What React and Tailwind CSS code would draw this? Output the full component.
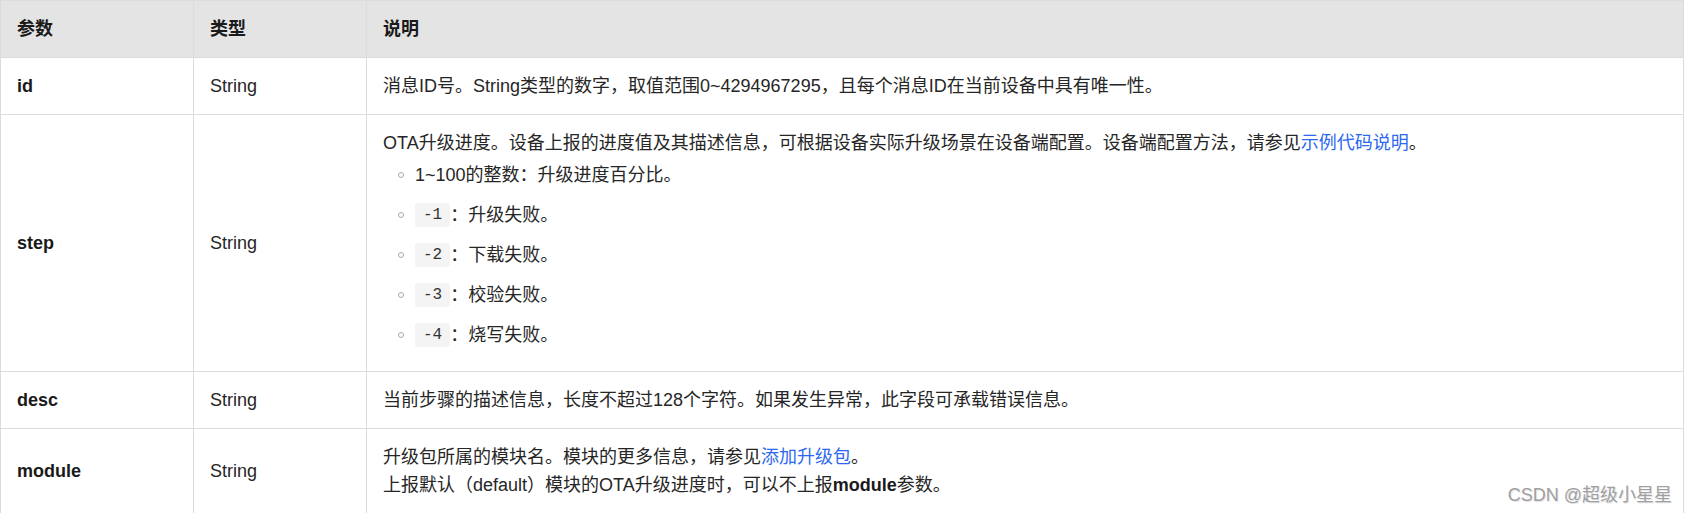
import React from 'react';

const Code = ({ children }) => (
  <code className="flex h-6 items-center rounded-[3px] bg-[#f4f4f4] px-2 font-['Liberation_Mono',monospace] text-[16px] text-[#333]">
    {children}
  </code>
);

const Item = ({ children }) => (
  <li className="flex h-7 items-center">
    <span className="ml-[15px] mr-[11px] h-[6px] w-[6px] shrink-0 rounded-full border border-[#aaa]" />
    <span className="flex h-7 items-center">{children}</span>
  </li>
);

const Link = ({ children }) => <a className="text-[#2c68f0]">{children}</a>;

const rows = [
  {
    name: 'id',
    type: 'String',
    desc: <p>消息ID号。String类型的数字，取值范围0~4294967295，且每个消息ID在当前设备中具有唯一性。</p>,
  },
  {
    name: 'step',
    type: 'String',
    desc: (
      <>
        <p>
          OTA升级进度。设备上报的进度值及其描述信息，可根据设备实际升级场景在设备端配置。设备端配置方法，请参见<Link>示例代码说明</Link>。
        </p>
        <ul className="mt-1 mb-2 flex flex-col gap-3">
          <Item>1~100的整数：升级进度百分比。</Item>
          <Item><Code>-1</Code>：升级失败。</Item>
          <Item><Code>-2</Code>：下载失败。</Item>
          <Item><Code>-3</Code>：校验失败。</Item>
          <Item><Code>-4</Code>：烧写失败。</Item>
        </ul>
      </>
    ),
  },
  {
    name: 'desc',
    type: 'String',
    desc: <p>当前步骤的描述信息，长度不超过128个字符。如果发生异常，此字段可承载错误信息。</p>,
  },
  {
    name: 'module',
    type: 'String',
    desc: (
      <>
        <p>升级包所属的模块名。模块的更多信息，请参见<Link>添加升级包</Link>。</p>
        <p>
          上报默认（default）模块的OTA升级进度时，可以不上报<strong className="font-bold text-[#1a1a1a]">module</strong>参数。
        </p>
      </>
    ),
  },
];

export default function App() {
  return (
    <div className="relative w-[1684px] bg-white font-['Liberation_Sans','Noto_Sans_CJK_SC',sans-serif] text-[18px] leading-7 text-[#262626]">
      <table className="w-full table-fixed border-collapse">
        <colgroup>
          <col className="w-[193px]" />
          <col className="w-[173px]" />
          <col />
        </colgroup>
        <thead>
          <tr className="bg-[#e4e4e4]">
            <th className="border border-[#dcdcdc] px-4 py-[14px] text-left font-bold text-[#1a1a1a]">参数</th>
            <th className="border border-[#dcdcdc] px-4 py-[14px] text-left font-bold text-[#1a1a1a]">类型</th>
            <th className="border border-[#dcdcdc] px-4 py-[14px] text-left font-bold text-[#1a1a1a]">说明</th>
          </tr>
        </thead>
        <tbody>
          {rows.map((r) => (
            <tr key={r.name}>
              <td className="border border-[#dcdcdc] px-4 py-[14px] align-middle font-bold text-[#1a1a1a]">{r.name}</td>
              <td className="border border-[#dcdcdc] px-4 py-[14px] align-middle">{r.type}</td>
              <td className="border border-[#dcdcdc] px-4 py-[14px] align-middle">{r.desc}</td>
            </tr>
          ))}
        </tbody>
      </table>
      <div className="absolute bottom-[5px] right-[12px] text-[18px] leading-7 text-[#a0a0a0] [text-shadow:1px_1px_0_#e6e6e6]">
        CSDN @超级小星星
      </div>
    </div>
  );
}
